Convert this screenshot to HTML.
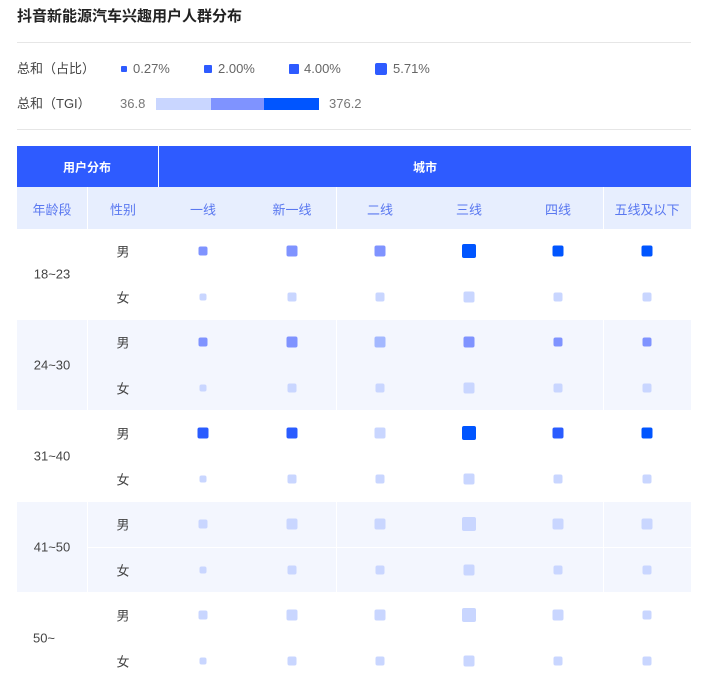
<!DOCTYPE html><html><head><meta charset="utf-8"><style>
html,body{margin:0;padding:0}
#w{position:relative;width:709px;height:684px;background:#fff;font-family:"Liberation Sans","Noto Sans CJK SC",sans-serif;overflow:hidden}
.a{position:absolute}
.t{font-size:13px;color:#444;line-height:16px}
.q{position:absolute;border-radius:2px;transform:translate(-50%,-50%)}
.c{position:absolute;font-size:13px;color:#444;transform:translate(-50%,-50%);white-space:nowrap}
.h{position:absolute;font-size:13px;color:#5a78f0;transform:translate(-50%,-50%);white-space:nowrap}
.sh{position:absolute;left:17px;width:674px;height:90px;background:#f3f6fe}
.v{position:absolute;width:1px;height:90px;background:#fff}
.D{background:#0055ff}.B{background:#2a5cff}.M{background:#7f93ff}.P{background:#a3b8ff}.L{background:#c9d6ff}
.s7{width:7px;height:7px}.s9{width:9px;height:9px}.s11{width:11px;height:11px}.s14{width:14px;height:14px}
.x1{left:203px}.x2{left:292px}.x3{left:380px}.x4{left:469px}.x5{left:558px}.x6{left:647px}
</style></head><body><div id="w">
<div class="a" style="left:17px;top:5px;font-size:15px;font-weight:bold;color:#222">抖音新能源汽车兴趣用户人群分布</div>
<div class="a" style="left:17px;top:42px;width:674px;height:1px;background:#e6e6e6"></div>
<div class="a t" style="left:17px;top:61px">总和（占比）</div>
<div class="a" style="left:121px;top:66px;width:6px;height:6px;background:#2e5bff;border-radius:1px"></div><div class="a t" style="left:133px;top:61px;color:#666">0.27%</div>
<div class="a" style="left:204px;top:65px;width:8px;height:8px;background:#2e5bff;border-radius:1px"></div><div class="a t" style="left:218px;top:61px;color:#666">2.00%</div>
<div class="a" style="left:289px;top:64px;width:10px;height:10px;background:#2e5bff;border-radius:1px"></div><div class="a t" style="left:304px;top:61px;color:#666">4.00%</div>
<div class="a" style="left:375px;top:63px;width:12px;height:12px;background:#2e5bff;border-radius:2px"></div><div class="a t" style="left:393px;top:61px;color:#666">5.71%</div>
<div class="a t" style="left:17px;top:96px">总和（TGI）</div>
<div class="a t" style="left:120px;top:96px;color:#777">36.8</div>
<div class="a" style="left:156px;top:98px;width:55px;height:12px;background:#c9d6ff"></div>
<div class="a" style="left:211px;top:98px;width:53px;height:12px;background:#7f93ff"></div>
<div class="a" style="left:264px;top:98px;width:55px;height:12px;background:#0055ff"></div>
<div class="a t" style="left:329px;top:96px;color:#777">376.2</div>
<div class="a" style="left:17px;top:129px;width:674px;height:1px;background:#e6e6e6"></div>
<div class="a" style="left:17px;top:146px;width:674px;height:41px;background:#2e5bff"></div>
<div class="a" style="left:158px;top:146px;width:1px;height:41px;background:#fff"></div>
<div class="c" style="left:87px;top:167px;color:#fff;font-weight:bold;font-size:12px">用户分布</div>
<div class="c" style="left:425px;top:167px;color:#fff;font-weight:bold;font-size:12px">城市</div>
<div class="a" style="left:17px;top:187px;width:674px;height:42px;background:#e7eefe"></div>
<div class="a" style="left:87px;top:187px;width:1px;height:42px;background:#fff"></div>
<div class="a" style="left:336px;top:187px;width:1px;height:42px;background:#fff"></div>
<div class="a" style="left:603px;top:187px;width:1px;height:42px;background:#fff"></div>
<div class="h" style="left:52px;top:209px">年龄段</div><div class="h" style="left:123px;top:209px">性别</div>
<div class="h x1" style="top:209px">一线</div><div class="h x2" style="top:209px">新一线</div><div class="h x3" style="top:209px">二线</div><div class="h x4" style="top:209px">三线</div><div class="h x5" style="top:209px">四线</div><div class="h x6" style="top:209px">五线及以下</div>

<div class="sh" style="top:320px"></div><div class="v" style="left:87px;top:320px"></div><div class="v" style="left:336px;top:320px"></div><div class="v" style="left:603px;top:320px"></div>
<div class="sh" style="top:502px"></div><div class="v" style="left:87px;top:502px"></div><div class="v" style="left:336px;top:502px"></div><div class="v" style="left:603px;top:502px"></div>
<div class="a" style="left:88px;top:547px;width:603px;height:1px;background:#fff"></div>

<div class="c" style="left:52px;top:274px">18~23</div>
<div class="c" style="left:52px;top:365px">24~30</div>
<div class="c" style="left:52px;top:456px">31~40</div>
<div class="c" style="left:52px;top:547px">41~50</div>
<div class="c" style="left:44px;top:638px">50~</div>

<div class="c" style="left:123px;top:251px">男</div><div class="c" style="left:123px;top:297px">女</div>
<div class="c" style="left:123px;top:342px">男</div><div class="c" style="left:123px;top:388px">女</div>
<div class="c" style="left:123px;top:433px">男</div><div class="c" style="left:123px;top:479px">女</div>
<div class="c" style="left:123px;top:524px">男</div><div class="c" style="left:123px;top:570px">女</div>
<div class="c" style="left:123px;top:615px">男</div><div class="c" style="left:123px;top:661px">女</div>

<div class="q x1 s9 M" style="top:251px"></div><div class="q x2 s11 M" style="top:251px"></div><div class="q x3 s11 M" style="top:251px"></div><div class="q x4 s14 D" style="top:251px"></div><div class="q x5 s11 D" style="top:251px"></div><div class="q x6 s11 D" style="top:251px"></div>
<div class="q x1 s7 L" style="top:297px"></div><div class="q x2 s9 L" style="top:297px"></div><div class="q x3 s9 L" style="top:297px"></div><div class="q x4 s11 L" style="top:297px"></div><div class="q x5 s9 L" style="top:297px"></div><div class="q x6 s9 L" style="top:297px"></div>

<div class="q x1 s9 M" style="top:342px"></div><div class="q x2 s11 M" style="top:342px"></div><div class="q x3 s11 P" style="top:342px"></div><div class="q x4 s11 M" style="top:342px"></div><div class="q x5 s9 M" style="top:342px"></div><div class="q x6 s9 M" style="top:342px"></div>
<div class="q x1 s7 L" style="top:388px"></div><div class="q x2 s9 L" style="top:388px"></div><div class="q x3 s9 L" style="top:388px"></div><div class="q x4 s11 L" style="top:388px"></div><div class="q x5 s9 L" style="top:388px"></div><div class="q x6 s9 L" style="top:388px"></div>

<div class="q x1 s11 B" style="top:433px"></div><div class="q x2 s11 B" style="top:433px"></div><div class="q x3 s11 L" style="top:433px"></div><div class="q x4 s14 D" style="top:433px"></div><div class="q x5 s11 B" style="top:433px"></div><div class="q x6 s11 D" style="top:433px"></div>
<div class="q x1 s7 L" style="top:479px"></div><div class="q x2 s9 L" style="top:479px"></div><div class="q x3 s9 L" style="top:479px"></div><div class="q x4 s11 L" style="top:479px"></div><div class="q x5 s9 L" style="top:479px"></div><div class="q x6 s9 L" style="top:479px"></div>

<div class="q x1 s9 L" style="top:524px"></div><div class="q x2 s11 L" style="top:524px"></div><div class="q x3 s11 L" style="top:524px"></div><div class="q x4 s14 L" style="top:524px"></div><div class="q x5 s11 L" style="top:524px"></div><div class="q x6 s11 L" style="top:524px"></div>
<div class="q x1 s7 L" style="top:570px"></div><div class="q x2 s9 L" style="top:570px"></div><div class="q x3 s9 L" style="top:570px"></div><div class="q x4 s11 L" style="top:570px"></div><div class="q x5 s9 L" style="top:570px"></div><div class="q x6 s9 L" style="top:570px"></div>

<div class="q x1 s9 L" style="top:615px"></div><div class="q x2 s11 L" style="top:615px"></div><div class="q x3 s11 L" style="top:615px"></div><div class="q x4 s14 L" style="top:615px"></div><div class="q x5 s11 L" style="top:615px"></div><div class="q x6 s9 L" style="top:615px"></div>
<div class="q x1 s7 L" style="top:661px"></div><div class="q x2 s9 L" style="top:661px"></div><div class="q x3 s9 L" style="top:661px"></div><div class="q x4 s11 L" style="top:661px"></div><div class="q x5 s9 L" style="top:661px"></div><div class="q x6 s9 L" style="top:661px"></div>
</div></body></html>
